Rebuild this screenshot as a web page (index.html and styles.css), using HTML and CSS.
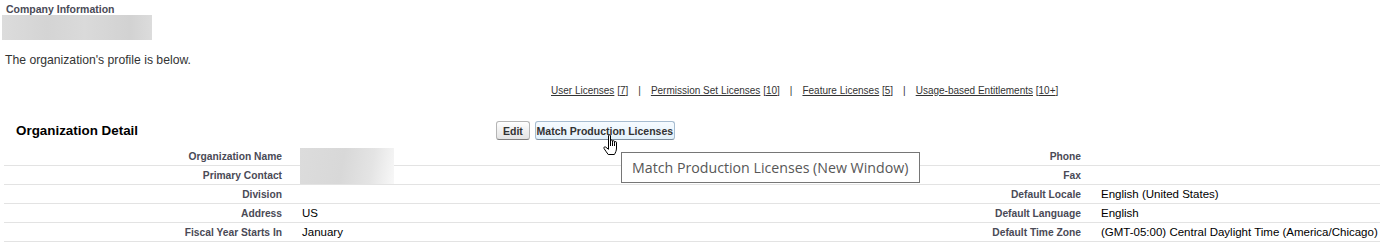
FILE: index.html
```html
<!DOCTYPE html>
<html lang="en">
<head>
  <meta charset="UTF-8" />
  <title>Company Information</title>
  <link rel="stylesheet" href="styles.css">
</head>
<body>
  <h1 class="page-title">Company Information</h1>
  <div class="blur-name"></div>

  <p class="intro">The organization's profile is below.</p>

  <div class="license-links">
    <span><a href="#">User Licenses</a> [<a href="#">7</a>]</span>
    <span class="sep">|</span>
    <span><a href="#">Permission Set Licenses</a> [<a href="#">10</a>]</span>
    <span class="sep">|</span>
    <span><a href="#">Feature Licenses</a> [<a href="#">5</a>]</span>
    <span class="sep">|</span>
    <span><a href="#">Usage-based Entitlements</a> [<a href="#">10+</a>]</span>
  </div>

  <div class="pb-header">
    <h2 class="pb-title">Organization Detail</h2>
    <div class="pb-buttons">
      <button class="btn">Edit</button>
      <button class="btn btn-hover">Match Production Licenses</button>
      <svg class="hand" width="17" height="22" viewBox="0 0 17 22">
        <path d="M5.5 1.8 C5.5 0.5 7.5 0.5 7.5 1.8 L7.5 8 L7.5 6.8 C7.5 5.8 9.5 5.8 9.5 6.8 L9.5 8.6 L9.5 7.4 C9.5 6.5 11.5 6.5 11.5 7.4 L11.5 9.2 L11.5 8.3 C11.5 7.4 13.5 7.4 13.5 8.3 L13.5 14 C13.5 16.8 12.4 18.8 11.4 20.5 L5.2 20.5 C4.2 19 2.6 17 1.1 14.6 C0.4 13.4 1.6 12.3 2.7 13.1 L5.5 15.3 Z" fill="#fff" stroke="#000" stroke-width="1" stroke-linejoin="round"/>
        <path d="M7.5 8 L7.5 12 M9.5 8.6 L9.5 12 M11.5 9.2 L11.5 12" stroke="#000" stroke-width="1" fill="none"/>
      </svg>
      <div class="tooltip">Match Production Licenses (New Window)</div>
    </div>
  </div>

  <div class="detail">
    <div class="row">
      <div class="label">Organization Name</div>
      <div class="data"><div class="blur-cell"></div></div>
      <div class="label">Phone</div>
      <div class="data"></div>
    </div>
    <div class="row">
      <div class="label">Primary Contact</div>
      <div class="data"></div>
      <div class="label">Fax</div>
      <div class="data"></div>
    </div>
    <div class="row">
      <div class="label">Division</div>
      <div class="data"></div>
      <div class="label">Default Locale</div>
      <div class="data">English (United States)</div>
    </div>
    <div class="row">
      <div class="label">Address</div>
      <div class="data">US</div>
      <div class="label">Default Language</div>
      <div class="data">English</div>
    </div>
    <div class="row">
      <div class="label">Fiscal Year Starts In</div>
      <div class="data">January</div>
      <div class="label">Default Time Zone</div>
      <div class="data">(GMT-05:00) Central Daylight Time (America/Chicago)</div>
    </div>
  </div>
</body>
</html>
```

FILE: styles.css
```css
body {
  margin: 0;
  padding: 0 0 0 4px;
  font-family: 'Liberation Sans', Arial, sans-serif;
  font-size: 12px;
  color: #000;
  background: #fff;
  overflow: hidden;
}

.page-title {
  margin: 3px 0 0 2px;
  font-size: 10.5px;
  line-height: 12px;
  font-weight: bold;
  color: #4a4a56;
}

.blur-name {
  width: 150px;
  height: 25px;
  margin-left: -2px;
  background: linear-gradient(to right, #dcdcdc, #d4d4d4 30%, #dadada 55%, #d2d2d2 85%, #dcdcdc);
}

.intro {
  margin: 14px 0 0 1px;
  font-size: 12.2px;
  line-height: 12px;
  color: #333;
}

.license-links {
  margin: 19px 0 0 547px;
  font-size: 10px;
  line-height: 12px;
  color: #333;
  display: flex;
  gap: 10px;
}

.license-links a {
  color: #333;
}

.pb-header {
  margin-top: 24px;
  display: flex;
  align-items: center;
  height: 19px;
}

.pb-title {
  width: 480px;
  margin: 0 0 0 12px;
  font-size: 13.4px;
  font-weight: bold;
  color: #000;
}

.pb-buttons {
  position: relative;
  display: flex;
  gap: 5px;
}

.btn {
  box-sizing: border-box;
  height: 19px;
  padding: 0 6px;
  font-family: 'Liberation Sans', Arial, sans-serif;
  font-size: 10.5px;
  font-weight: bold;
  color: #333;
  white-space: nowrap;
  border: 1px solid #b5b5b5;
  border-bottom-color: #7f7f7f;
  border-radius: 3px;
  background: linear-gradient(#fff, #f0f0f0 50%, #e4e4e4);
}

.btn-hover {
  width: 140px;
  padding: 0;
  background: linear-gradient(#f6fbff, #e3f1fb);
  border-color: #a6bcd0;
  border-bottom-color: #7f8f9f;
}

.hand {
  position: absolute;
  left: 107px;
  top: 13px;
}

.tooltip {
  position: absolute;
  left: 125px;
  top: 31px;
  width: 287px;
  height: 29px;
  padding-left: 10px;
  border: 1px solid #767676;
  background: #fff;
  font-family: 'Open Sans', sans-serif;
  font-size: 14.2px;
  line-height: 29px;
  color: #575757;
  white-space: nowrap;
  z-index: 5;
}

.detail {
  margin-top: 7px;
}

.row {
  display: grid;
  grid-template-columns: 288px 399px 400px 1fr;
  height: 18px;
  border-bottom: 1px solid #e3e3e3;
  align-items: center;
}

.label {
  text-align: right;
  padding-right: 10px;
  font-size: 10.25px;
  font-weight: bold;
  color: #4a4a56;
}

.data {
  position: relative;
  padding-left: 10px;
  font-size: 11.5px;
  color: #000;
  white-space: nowrap;
}

.blur-cell {
  position: absolute;
  left: 8px;
  top: -8px;
  width: 94px;
  height: 36px;
  background: linear-gradient(100deg, #dcdcdc, #d8d8d8 45%, #e4e4e4 75%, #f8f8f8);
}
```
